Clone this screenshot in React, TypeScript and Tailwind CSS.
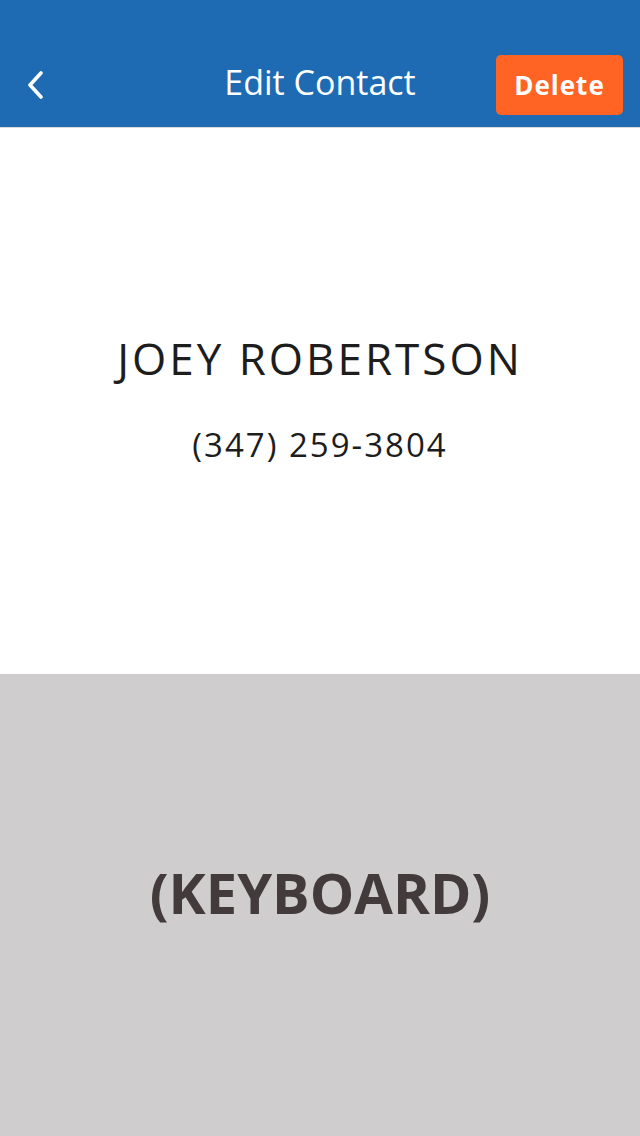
export default function App() {
  return (
    <div className="w-[640px] h-[1136px] flex flex-col bg-white font-['Open_Sans',sans-serif]">
      {/* Header */}
      <header className="relative h-[128px] shrink-0 bg-[#1e6bb4] border-b border-[#d9d9d9] flex items-end pb-[12px]">
        <div className="w-full h-[60px] flex items-center justify-between pl-[26px] pr-[17px]">
          <button className="w-[20px] h-[30px] flex items-center">
            <svg width="18" height="28" viewBox="0 0 18 28" fill="none">
              <path d="M15 2 L4 14 L15 26" stroke="white" strokeWidth="3.6" strokeLinecap="round" strokeLinejoin="round" />
            </svg>
          </button>
          <h1 className="absolute left-0 right-0 text-center text-white text-[34px] font-normal -translate-y-[3px] pointer-events-none">
            Edit Contact
          </h1>
          <button className="w-[127px] h-[60px] rounded-[5px] bg-[#ff6424] text-white text-[26px] font-bold tracking-[1px]">
            Delete
          </button>
        </div>
      </header>

      {/* Contact info */}
      <section className="h-[546px] flex flex-col items-center justify-center pb-[6px]">
        <h2 className="text-[#1d1d1d] text-[44px] font-medium tracking-[3px] leading-none">JOEY ROBERTSON</h2>
        <p className="mt-[48px] text-[#1d1d1d] text-[33px] tracking-[2px] leading-none">(347) 259-3804</p>
      </section>

      {/* Keyboard placeholder */}
      <section className="flex-1 bg-[#cfcdce] flex items-center justify-center pb-[26px]">
        <span className="text-[#433b3b] text-[56px] font-bold">(KEYBOARD)</span>
      </section>
    </div>
  )
}
